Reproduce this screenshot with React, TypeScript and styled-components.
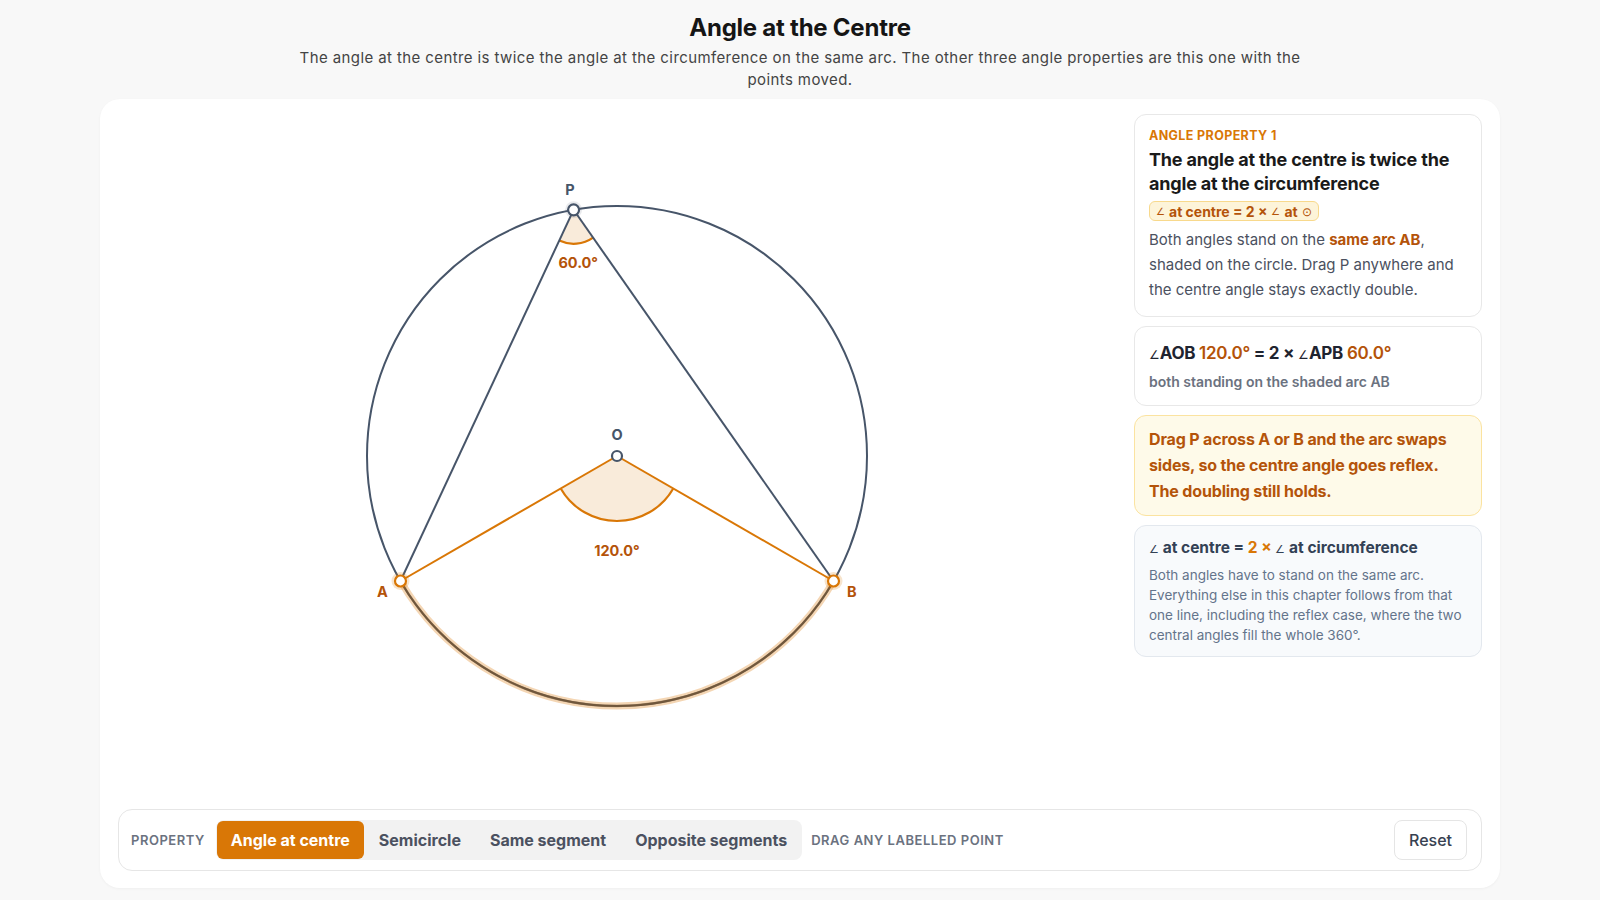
import styled, { createGlobalStyle } from "styled-components";

const GlobalStyle = createGlobalStyle`
  * { box-sizing: border-box; }
  html, body { margin: 0; padding: 0; }
  body {
    background: #f8f8f8;
    font-family: Inter, "Noto Sans", "Liberation Sans", sans-serif;
    color: #1a1a1a;
  }
`;

const SLATE = "#475569";
const ORANGE = "#d97706";
const BROWN = "#b45309";
const WEDGE = "rgba(217, 119, 6, 0.15)";

// circle geometry (svg space)
const CX = 280;
const CY = 280;
const R = 250;

type Pt = { x: number; y: number };

// screen angles: 0 = right, 90 = down
function polar(c: Pt, r: number, deg: number): Pt {
  const a = (deg * Math.PI) / 180;
  return { x: c.x + r * Math.cos(a), y: c.y + r * Math.sin(a) };
}

function angleOf(from: Pt, to: Pt) {
  return (Math.atan2(to.y - from.y, to.x - from.x) * 180) / Math.PI;
}

const O: Pt = { x: CX, y: CY };
const A = polar(O, R, 150);
const B = polar(O, R, 30);
const P = polar(O, R, -100);

function wedge(c: Pt, r: number, a1: number, a2: number) {
  const s = polar(c, r, a1);
  const e = polar(c, r, a2);
  const sweep = a2 > a1 ? 1 : 0;
  return {
    fill: `M ${c.x} ${c.y} L ${s.x} ${s.y} A ${r} ${r} 0 0 ${sweep} ${e.x} ${e.y} Z`,
    arc: `M ${s.x} ${s.y} A ${r} ${r} 0 0 ${sweep} ${e.x} ${e.y}`,
  };
}

export default function App() {
  const pa = angleOf(P, A);
  const pb = angleOf(P, B);
  const pWedge = wedge(P, 34, pa, pb);
  const pLabel = polar(P, 53, (pa + pb) / 2);
  const oWedge = wedge(O, 65, 30, 150);
  const arcAB = `M ${A.x} ${A.y} A ${R} ${R} 0 0 0 ${B.x} ${B.y}`;

  const label = (p: Pt, deg: number, r = 21) => polar(p, r, deg);
  const pl = label(P, -100);
  const al = label(A, 150);
  const bl = label(B, 30);

  return (
    <>
      <GlobalStyle />
      <Page>
        <Header>
          <Title>Angle at the Centre</Title>
          <Subtitle>
            The angle at the centre is twice the angle at the circumference on
            the same arc. The other three angle properties are this one with
            the points moved.
          </Subtitle>
        </Header>

        <Card>
          <Main>
            <Canvas>
              <svg width="560" height="560" viewBox="0 0 560 560">
                <circle cx={CX} cy={CY} r={R} fill="none" stroke={SLATE} strokeWidth={2} />
                <path d={arcAB} fill="none" stroke={ORANGE} strokeOpacity={0.3} strokeWidth={7} />
                <path d={arcAB} fill="none" stroke="#6e5232" strokeOpacity={0.6} strokeWidth={2.4} />

                <path d={oWedge.fill} fill={WEDGE} />
                <path d={oWedge.arc} fill="none" stroke={ORANGE} strokeWidth={2.2} />
                <path d={pWedge.fill} fill={WEDGE} />
                <path d={pWedge.arc} fill="none" stroke={ORANGE} strokeWidth={2.2} />

                <line x1={P.x} y1={P.y} x2={A.x} y2={A.y} stroke={SLATE} strokeWidth={2} />
                <line x1={P.x} y1={P.y} x2={B.x} y2={B.y} stroke={SLATE} strokeWidth={2} />
                <line x1={O.x} y1={O.y} x2={A.x} y2={A.y} stroke={ORANGE} strokeWidth={2} />
                <line x1={O.x} y1={O.y} x2={B.x} y2={B.y} stroke={ORANGE} strokeWidth={2} />

                <AngleText x={O.x} y={O.y + 94}>120.0°</AngleText>
                <AngleText x={pLabel.x} y={pLabel.y}>60.0°</AngleText>

                <circle cx={A.x} cy={A.y} r={9} fill={ORANGE} fillOpacity={0.2} />
                <circle cx={B.x} cy={B.y} r={9} fill={ORANGE} fillOpacity={0.2} />
                <circle cx={P.x} cy={P.y} r={8.5} fill={SLATE} fillOpacity={0.12} />

                <circle cx={P.x} cy={P.y} r={5.5} fill="#fff" stroke={SLATE} strokeWidth={2.2} />
                <circle cx={O.x} cy={O.y} r={5} fill="#fff" stroke={SLATE} strokeWidth={2.2} />
                <circle cx={A.x} cy={A.y} r={5.5} fill="#fff" stroke={ORANGE} strokeWidth={2.2} />
                <circle cx={B.x} cy={B.y} r={5.5} fill="#fff" stroke={ORANGE} strokeWidth={2.2} />

                <PointText x={pl.x} y={pl.y} $tone="slate">P</PointText>
                <PointText x={O.x} y={O.y - 22} $tone="slate">O</PointText>
                <PointText x={al.x} y={al.y} $tone="orange">A</PointText>
                <PointText x={bl.x} y={bl.y} $tone="orange">B</PointText>
              </svg>
            </Canvas>

            <Side>
              <InfoCard>
                <Eyebrow>Angle property 1</Eyebrow>
                <CardTitle>The angle at the centre is twice the angle at the circumference</CardTitle>
                <Chip>
                  <SmallAngle>∠</SmallAngle> at centre = 2 × <SmallAngle>∠</SmallAngle> at{" "}
                  <Dot>⊙</Dot>
                </Chip>
                <Body>
                  Both angles stand on the <Hl>same arc AB</Hl>, shaded on the
                  circle. Drag P anywhere and the centre angle stays exactly
                  double.
                </Body>
              </InfoCard>

              <InfoCard>
                <Readout>
                  <SmallAngle>∠</SmallAngle>AOB <Num>120.0°</Num> = 2 ×{" "}
                  <SmallAngle>∠</SmallAngle>APB <Num>60.0°</Num>
                </Readout>
                <ReadoutNote>both standing on the shaded arc AB</ReadoutNote>
              </InfoCard>

              <InfoCard $variant="note">
                <NoteText>
                  Drag P across A or B and the arc swaps sides, so the centre
                  angle goes reflex. The doubling still holds.
                </NoteText>
              </InfoCard>

              <InfoCard $variant="muted">
                <RuleTitle>
                  <SmallAngle>∠</SmallAngle> at centre = <Orange>2 ×</Orange>{" "}
                  <SmallAngle>∠</SmallAngle> at circumference
                </RuleTitle>
                <RuleBody>
                  Both angles have to stand on the same arc. Everything else in
                  this chapter follows from that one line, including the reflex
                  case, where the two central angles fill the whole 360°.
                </RuleBody>
              </InfoCard>
            </Side>
          </Main>

          <Toolbar>
            <ToolLabel>Property</ToolLabel>
            <Segments>
              <SegButton $active>Angle at centre</SegButton>
              <SegButton>Semicircle</SegButton>
              <SegButton>Same segment</SegButton>
              <SegButton>Opposite segments</SegButton>
            </Segments>
            <ToolLabel>Drag any labelled point</ToolLabel>
            <ResetButton>Reset</ResetButton>
          </Toolbar>
        </Card>
      </Page>
    </>
  );
}

const Page = styled.div`
  height: 100vh;
  display: flex;
  flex-direction: column;
  align-items: center;
  padding: 0 100px 12px;
`;

const Header = styled.header`
  display: flex;
  flex-direction: column;
  align-items: center;
  padding-top: 12px;
  height: 99px;
`;

const Title = styled.h1`
  margin: 0;
  font-size: 24px;
  line-height: 32px;
  font-weight: 700;
  color: #151515;
  letter-spacing: -0.01em;
`;

const Subtitle = styled.p`
  margin: 3px 0 0;
  max-width: 1020px;
  text-align: center;
  font-size: 15px;
  line-height: 21.5px;
  letter-spacing: 0.4px;
  color: #444;
`;

const Card = styled.main`
  flex: 1;
  width: 100%;
  background: #fff;
  border-radius: 20px;
  box-shadow: 0 1px 3px rgba(0, 0, 0, 0.04);
  padding: 15px 18px 17px;
  display: flex;
  flex-direction: column;
  gap: 18px;
`;

const Main = styled.div`
  flex: 1;
  display: flex;
  gap: 18px;
  min-height: 0;
`;

const Canvas = styled.div`
  flex: 1;
  display: flex;
  align-items: center;
  justify-content: center;
  padding-top: 7px;
  border-radius: 14px;
`;

const AngleText = styled.text`
  font-family: Inter, "Noto Sans", sans-serif;
  font-size: 14.5px;
  font-weight: 700;
  fill: ${BROWN};
  text-anchor: middle;
  dominant-baseline: central;
`;

const PointText = styled.text<{ $tone: "slate" | "orange" }>`
  font-family: Inter, "Noto Sans", sans-serif;
  font-size: 14.5px;
  font-weight: 700;
  fill: ${(p) => (p.$tone === "slate" ? SLATE : BROWN)};
  text-anchor: middle;
  dominant-baseline: central;
`;

const Side = styled.aside`
  width: 348px;
  display: flex;
  flex-direction: column;
  gap: 9px;
`;

const InfoCard = styled.section<{ $variant?: "note" | "muted" }>`
  border-radius: 12px;
  padding: ${(p) =>
    p.$variant === "note" ? "10px 14px 11px" : p.$variant === "muted" ? "11px 14px 11px" : "13px 14px 14px"};
  border: 1px solid
    ${(p) =>
      p.$variant === "note" ? "#fbe3a0" : p.$variant === "muted" ? "#e3e8ee" : "#e8e8e8"};
  background: ${(p) =>
    p.$variant === "note" ? "#fefae9" : p.$variant === "muted" ? "#f8fafc" : "#fff"};
`;

const Eyebrow = styled.div`
  font-size: 12.5px;
  font-weight: 700;
  letter-spacing: 0.03em;
  text-transform: uppercase;
  color: ${ORANGE};
  line-height: 16px;
`;

const CardTitle = styled.h2`
  margin: 4px 0 0;
  font-size: 18px;
  line-height: 24px;
  font-weight: 700;
  color: #1a1a1a;
  letter-spacing: -0.01em;
`;

const Chip = styled.span`
  display: inline-flex;
  align-items: center;
  gap: 4px;
  margin-top: 5px;
  padding: 1px 6px;
  height: 20px;
  border-radius: 6px;
  background: #fdf4d9;
  border: 1px solid #f8d98c;
  font-size: 14px;
  font-weight: 700;
  color: ${BROWN};
`;

const SmallAngle = styled.span`
  font-size: 0.7em;
  font-weight: 500;
`;

const Dot = styled.span`
  font-size: 0.85em;
  font-weight: 500;
`;

const Body = styled.p`
  margin: 6px 0 0;
  font-size: 15px;
  line-height: 25px;
  color: #4b5160;
`;

const Hl = styled.strong`
  color: ${BROWN};
  font-weight: 700;
`;

const Readout = styled.div`
  margin-top: 1px;
  font-size: 17px;
  line-height: 24px;
  font-weight: 700;
  color: #1f2430;
  letter-spacing: -0.015em;
`;

const Num = styled.span`
  color: ${BROWN};
  font-weight: 600;
`;

const ReadoutNote = styled.div`
  margin-top: 6px;
  font-size: 14px;
  line-height: 18px;
  font-weight: 600;
  color: #6b7280;
`;

const NoteText = styled.p`
  margin: 0;
  font-size: 16px;
  line-height: 26px;
  font-weight: 700;
  color: #b4540a;
  letter-spacing: -0.01em;
`;

const RuleTitle = styled.div`
  font-size: 15.5px;
  line-height: 22px;
  font-weight: 700;
  color: #334155;
`;

const Orange = styled.span`
  color: ${ORANGE};
`;

const RuleBody = styled.p`
  margin: 5px 0 0;
  font-size: 13.5px;
  line-height: 20px;
  color: #64748b;
`;

const Toolbar = styled.footer`
  height: 62px;
  border: 1px solid #e6e6e6;
  border-radius: 14px;
  display: flex;
  align-items: center;
  gap: 11px;
  padding: 0 14px 0 12px;
`;

const ToolLabel = styled.span`
  font-size: 13px;
  font-weight: 600;
  letter-spacing: 0.04em;
  text-transform: uppercase;
  color: #6b7280;
`;

const Segments = styled.div`
  display: flex;
  gap: 1px;
  padding: 1px;
  border-radius: 8px;
  background: #f2f2f2;
  margin-right: -2px;
`;

const SegButton = styled.button<{ $active?: boolean }>`
  height: 38px;
  padding: 0 14px;
  border: none;
  border-radius: 6px;
  font-family: inherit;
  font-size: 16px;
  font-weight: 700;
  background: ${(p) => (p.$active ? ORANGE : "transparent")};
  color: ${(p) => (p.$active ? "#fff" : "#4b5160")};
  cursor: pointer;
`;

const ResetButton = styled.button`
  margin-left: auto;
  height: 40px;
  padding: 0 14px;
  border: 1px solid #e5e5e5;
  border-radius: 8px;
  background: #fff;
  font-family: inherit;
  font-size: 16px;
  font-weight: 500;
  color: #374151;
  cursor: pointer;
`;
